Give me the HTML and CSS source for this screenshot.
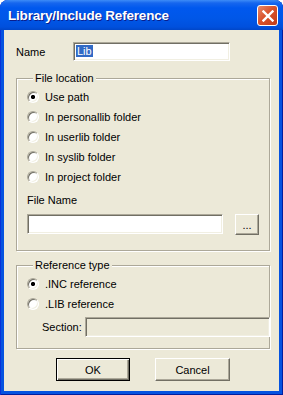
FILE: index.html
```html
<!DOCTYPE html>
<html lang="en">
<head>
    <meta charset="UTF-8">
    <title>Library/Include Reference</title>
    <link rel="stylesheet" href="styles.css">
</head>
<body>
    <div class="window">
        <div class="titlebar">
            <span class="title">Library/Include Reference</span>
            <div class="close-btn">
                <svg width="12" height="12" viewBox="0 0 12 12">
                    <path d="M1.5 1.5 L10.5 10.5 M10.5 1.5 L1.5 10.5" stroke="#fff" stroke-width="2.4" stroke-linecap="square"/>
                </svg>
            </div>
        </div>
        <div class="client">
            <div class="name-row">
                <label class="name-label">Name</label>
                <div class="field name-field"><span class="sel">Lib</span></div>
            </div>

            <fieldset class="group group-loc">
                <legend>File location</legend>
                <div class="radio-row"><span class="radio checked"></span><span>Use path</span></div>
                <div class="radio-row"><span class="radio"></span><span>In personallib folder</span></div>
                <div class="radio-row"><span class="radio"></span><span>In userlib folder</span></div>
                <div class="radio-row"><span class="radio"></span><span>In syslib folder</span></div>
                <div class="radio-row"><span class="radio"></span><span>In project folder</span></div>
                <div class="file-label">File Name</div>
                <div class="file-row">
                    <div class="field file-field"></div>
                    <button class="btn browse-btn">...</button>
                </div>
            </fieldset>

            <fieldset class="group group-ref">
                <legend>Reference type</legend>
                <div class="radio-row"><span class="radio checked"></span><span>.INC reference</span></div>
                <div class="radio-row"><span class="radio"></span><span>.LIB reference</span></div>
                <div class="section-row">
                    <span class="section-label">Section:</span>
                    <div class="field section-field"></div>
                </div>
            </fieldset>

            <div class="btn-row">
                <button class="btn btn-default">OK</button>
                <button class="btn">Cancel</button>
            </div>
        </div>
    </div>
</body>
</html>
```

FILE: styles.css
```css
*{
    box-sizing: border-box;
}
body{
    margin: 0;
    background: #fff;
    font-family: "Liberation Sans", Arial, sans-serif;
    font-size: 11px;
    color: #000;
}
.window{
    width: 283px;
    height: 395px;
    display: flex;
    flex-direction: column;
    background: #0553e0;
    border-radius: 8px 8px 0 0;
    box-shadow: inset 1px 0 0 #0831d9, inset -1px 0 0 #001ea0, inset 0 -1px 0 #001ea0;
}
.titlebar{
    height: 30px;
    display: flex;
    align-items: center;
    justify-content: space-between;
    padding: 0 5px 0 8px;
    border-radius: 8px 8px 0 0;
    background: linear-gradient(#3d8cf7 0, #1666ee 3px, #0058ee 8px, #0057e8 60%, #0050dd 90%, #0046c8 100%);
}
.title{
    color: #fff;
    font-family: "Liberation Sans", Arial, sans-serif;
    font-weight: bold;
    font-size: 13.5px;
    letter-spacing: -0.2px;
    text-shadow: 1px 1px 0 #0a1e8c;
    margin-top: 1px;
}
.close-btn{
    width: 21px;
    height: 21px;
    border: 1px solid #fff;
    border-radius: 3px;
    background: linear-gradient(135deg, #e88a6c 0, #d9532c 45%, #c13c18 100%);
    display: flex;
    align-items: center;
    justify-content: center;
    margin-top: 1px;
}
.client{
    flex-grow: 1;
    margin: 0 4px 4px 4px;
    background: #ece9d8;
    padding: 12px 10px 0 12px;
}

.field{
    background: #fff;
    border: 1px solid;
    border-color: #aca899 #fff #fff #aca899;
    box-shadow: inset 1px 1px 0 #716f64, inset -1px -1px 0 #f1efe2;
}

.name-row{
    display: flex;
    align-items: center;
}
.name-label{
    width: 57px;
}
.name-field{
    width: 157px;
    height: 19px;
    padding: 2px 0 0 2px;
    line-height: 13px;
}
.sel{
    background: #316ac5;
    color: #fff;
    padding: 0 1px;
}

.group{
    margin: 11px 0 0 0;
    padding: 3px 0 0 10px;
    width: 254px;
    min-width: 0;
    border: 1px solid #aca899;
    box-shadow: 1px 1px 0 #fff, inset 1px 1px 0 #fff;
}
.group legend{
    margin-left: 6px;
    padding: 0 2px;
    line-height: 12px;
    background: #ece9d8;
}
.group-loc{
    height: 179px;
}
.group-ref{
    margin-top: 8px;
    height: 90px;
}

.radio-row{
    height: 20px;
    display: flex;
    align-items: center;
    gap: 6px;
}
.radio{
    width: 12px;
    height: 12px;
    border-radius: 50%;
    border: 1px solid;
    border-color: #aca899 #fff #fff #aca899;
    box-shadow: inset 1px 1px 0 #716f64, inset -1px -1px 0 #f1efe2;
    background: #fff;
}
.radio.checked{
    background: radial-gradient(circle, #000 0, #000 1.8px, #fff 2.4px);
}

.file-label{
    margin-top: 7px;
    line-height: 13px;
}
.file-row{
    display: flex;
    gap: 12px;
    margin-top: 7px;
}
.file-field{
    width: 196px;
    height: 20px;
}

.btn{
    font-family: "Liberation Sans", Arial, sans-serif;
    font-size: 11px;
    color: #000;
    background: #ece9d8;
    border: 1px solid;
    border-color: #fff #716f64 #716f64 #fff;
    box-shadow: inset -1px -1px 0 #aca899;
    padding: 0;
}
.browse-btn{
    width: 24px;
    height: 21px;
}

.section-row{
    display: flex;
    align-items: center;
    margin-top: 3px;
    padding-left: 15px;
}
.section-label{
    width: 43px;
}
.section-field{
    width: 185px;
    height: 20px;
    background: #ece9d8;
    margin-right: -10px;
}

.btn-row{
    display: flex;
    gap: 25px;
    margin-top: 9px;
    padding-left: 40px;
}
.btn-row .btn{
    width: 75px;
    height: 23px;
}
.btn-row .btn-default{
    width: 74px;
    border: 1px solid #000;
    box-shadow: inset 1px 1px 0 #fff, inset -1px -1px 0 #716f64, inset -2px -2px 0 #aca899;
}
```
